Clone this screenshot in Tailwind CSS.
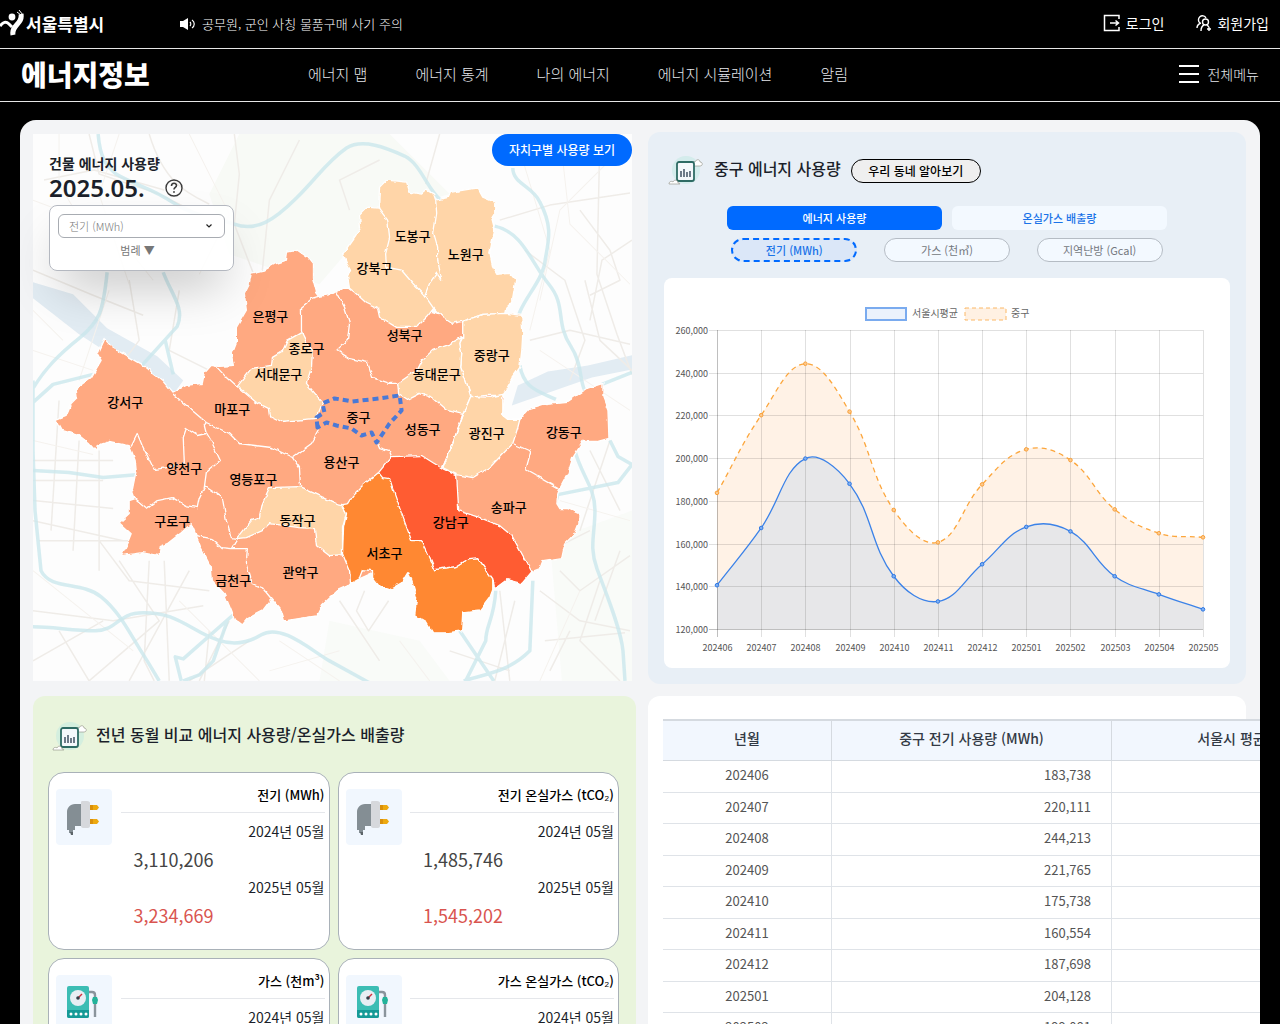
<!DOCTYPE html>
<html lang="ko">
<head>
    <meta charset="UTF-8">
    <meta name="viewport" content="width=device-width, initial-scale=1.0">
    <title>서울특별시 에너지정보</title>
    <script src="https://cdn.jsdelivr.net/npm/@tailwindcss/browser@4"></script>
</head>
<body class="bg-black min-h-screen overflow-x-hidden font-['Noto_Sans_CJK_KR',sans-serif] text-[#1b1f2a]">

    <!-- Shared icons -->
    <svg class="hidden">
        <symbol id="icon-report" viewBox="0 0 36 30">
            <circle cx="18" cy="14" r="14" fill="#bfe9e2" fill-opacity=".5"/>
            <path d="M24 9c-1-3 2-4 3-3 1-3 5-3 5 0 3 0 3 4 0 4h-7z" fill="#fff" stroke="#8b8b80" stroke-width=".6"/>
            <rect x="9" y="6" width="17" height="19" rx="2" fill="#f4f8fb" stroke="#2e6b64" stroke-width="1.8"/>
            <path d="M13 21v-6M16 21v-8M19 21v-5M22 21v-6" stroke="#4c5b6c" stroke-width="1.6"/>
            <path d="M1 28c0-3 3-3 4-2 1-3 5-2 5 1 2 0 2 1 2 1z" fill="#fff" stroke="#8b8b80" stroke-width=".6"/>
        </symbol>
        <symbol id="icon-plug" viewBox="0 0 56 56">
            <rect width="56" height="56" rx="4" fill="#f1f7fe"/>
            <path d="M25 15h-6c-5 0-8 4-8 8v18h2v3h4v-3h2v-4h6z" fill="#848e94"/>
            <path d="M14 43h3v3h-2z" fill="#5d6569"/>
            <path d="M25 13c0-1 1-1 2-1h4c2 0 3 1 3 2v23c0 1-1 2-2 2h-5c-1 0-2-1-2-2z" fill="#d6d8dc"/>
            <path d="M34 16h7l2 2.500-2 2.500h-7zM34 30h7l2 2.500-2 2.500h-7z" fill="#eda910"/>
            <path d="M34 16h3v5h-3zM34 30h3v5h-3z" fill="#d98f0c"/>
        </symbol>
        <symbol id="icon-gas" viewBox="0 0 56 56">
            <rect width="56" height="56" rx="4" fill="#f1f7fe"/>
            <rect x="11" y="11" width="22" height="32" rx="2" fill="#3cbdb4"/>
            <path d="M11 35h22v6a2 2 0 0 1-2 2H13a2 2 0 0 1-2-2z" fill="#159a97"/>
            <circle cx="22" cy="23" r="8" fill="#e9eef4"/>
            <path d="M22 23l4-4" stroke="#d3333f" stroke-width="1.4"/>
            <circle cx="22" cy="23" r="1.8" fill="#333c48"/>
            <g fill="#fff"><circle cx="15" cy="39" r="1.5"/><circle cx="20" cy="39" r="1.5"/><circle cx="25" cy="39" r="1.5"/><circle cx="30" cy="39" r="1.5"/></g>
            <path d="M33 17h3c2 0 3 1 3 3v22" fill="none" stroke="#8a949c" stroke-width="2.4"/>
            <path d="M37 22h4l1 3-1 4h-4l-1-4z" fill="#22b39a"/>
        </symbol>
    </svg>

    <header class="text-white">
        <div class="flex h-12 items-center">
            <a href="#" class="flex w-[180px] items-center gap-[2px]" aria-label="서울특별시">
                <svg class="h-7 w-6" viewBox="0 0 24 28" fill="none">
                    <circle cx="12" cy="7" r="3.4" fill="#fff"/>
                    <path d="M0 16c3-4 6-5 9-2l3 3" stroke="#fff" stroke-width="3"/>
                    <path d="M21 4c2 10-10 11-8 21" stroke="#fff" stroke-width="5"/>
                    <path d="M17 2l4 3M19 0l4 5" stroke="#fff" stroke-width="1"/>
                </svg>
                <span class="text-[17px] leading-6 font-bold">서울특별시</span>
            </a>
            <p class="flex items-center gap-[6px] text-[13px] leading-6 font-light">
                <svg class="h-3 w-4" viewBox="0 0 16 12" fill="none">
                    <path d="M0 3h3l5-3v12L3 9H0z" fill="#fff"/>
                    <path d="M10 4c1 1 1 3 0 4M12 2c3 2 3 6 0 8" stroke="#fff" stroke-width="1.2"/>
                </svg>
                공무원, 군인 사칭 물품구매 사기 주의
            </p>
            <div class="ml-auto flex items-center gap-8 pr-[11px] pb-[2px] text-[14px] leading-6">
                <a href="#" class="flex items-center gap-[5px]">
                    <svg class="h-[18px] w-[18px]" viewBox="0 0 18 18" fill="none" stroke="#fff" stroke-width="1.5">
                        <path d="M16 5V1.500H1.500V16.500H16V13M7 9h8M12.500 6.500L15.500 9l-3 2.500"/>
                    </svg>
                    로그인
                </a>
                <a href="#" class="flex items-center gap-[5px]">
                    <svg class="h-[18px] w-4" viewBox="0 0 16 18" fill="none" stroke="#fff" stroke-width="1.400">
                        <path d="M4 9a4 4 0 1 1 6-5M1 14c0-2 1-4 4-5"/>
                        <circle cx="9.500" cy="8" r="3"/>
                        <path d="M5 17c0-3 1-5 3-6M11 11l2 2M13 13v4M11 15h4"/>
                    </svg>
                    회원가입
                </a>
            </div>
        </div>
        <div class="flex h-[54px] items-center border-y border-white/90 px-[21px] pb-[2px]">
            <h1 class="w-[287px] text-[28px] leading-[50px] font-black">에너지정보</h1>
            <nav class="flex gap-12 text-[15px] leading-6 font-light text-gray-200">
                <a href="#">에너지 맵</a>
                <a href="#">에너지 통계</a>
                <a href="#">나의 에너지</a>
                <a href="#">에너지 시뮬레이션</a>
                <a href="#">알림</a>
            </nav>
            <button class="ml-auto flex items-center gap-2 text-[14px] leading-6 font-light text-gray-200">
                <svg class="h-[18px] w-5" viewBox="0 0 20 18" stroke="#fff" stroke-width="2"><path d="M0 1h20M0 9h20M0 17h20"/></svg>
                전체메뉴
            </button>
        </div>
    </header>

    <main class="mx-5 mt-[18px] grid grid-cols-[603fr_598fr] gap-3 overflow-hidden rounded-2xl bg-[#f3f4f6] pt-3 pr-[14px] pb-8 pl-[13px]">

        <!-- Map -->
        <section class="relative pt-[2px] pr-1">
            <svg class="block w-full" viewBox="34 134 598 546">
                <defs>
                    <filter id="rough" x="0" y="0" width="1" height="1">
                        <feTurbulence type="fractalNoise" baseFrequency=".13" numOctaves="2" seed="4"/>
                        <feDisplacementMap in="SourceGraphic" scale="4" xChannelSelector="R" yChannelSelector="G"/>
                    </filter>
                    <clipPath id="frame"><rect x="34" y="134" width="598" height="546"/></clipPath>
                </defs>
                <g clip-path="url(#frame)" fill="none" stroke-linejoin="round">
                    <rect x="34" y="134" width="598" height="546" fill="#fdfdfd"/>
                    <path d="M240 134h150l60 60-70 20-60 70-90-30-20-60z" fill="#f8faf6"/>
                    <path d="M550 540l82-30v170h-70zM330 620l90 20 30 40H320z" fill="#f9fbf8"/>
                    <path d="M34 282l40 12 34 34 50 28 26 24-10 14-44-28-50-32-46-36z" fill="#e2ecf3"/>
                    <path d="M518 385l30-14 40-6 44-10v14l-40 8-40 14-40 14z" fill="#e2ecf3"/>
                    <!-- minor roads -->
                    <g stroke="#efece8" stroke-width="1.500">
                        <path d="M150 134c15 50 40 60 60 70M235 134l5 40-5 50 27 70M300 140l-30 60-8 80M90 134l10 40 60 20 60 30M34 270l60 25 50 20M45 180l50-10 70 20M130 280l10 60-30 40M180 290l-10 60 40 20M380 160l-40 20 10 30M440 134l-14 50M500 220l50-15 80-12M525 250l40 30 20 60-15 40M600 134l-3 140 20 60 15 40M580 210l30 40 10 30-30 15M530 340l40-10 60 14M585 280l15 60 32 30M632 240l-30 20-12 60"/>
                        <path d="M34 460h80M34 480h70M34 500l80 8M40 540h90M60 400l-8 130M80 440l-6 110M100 450v120M34 520l90 20M120 560l40 60-70 60M150 560l-5 100 10 20M100 540l30 40 80 10M34 610l80 10 90-15M60 630l30 50M34 660l70-40M165 560l5 120M190 570l-60 110M230 620l-30 60M250 640l-60 40M210 630l-5 50"/>
                        <path d="M365 590l-8 20 12 20 20-30M340 600l40 60M500 590l10 90M515 600l-20 80M560 570l20 20 50-35M540 590l40 30 50 10M545 640l80-8M570 630l-20 40M600 580l-20 60 40 40M450 650l60 20M620 550l-25 70M530 560l60-30M590 450l30 60M610 440l-30 90"/>
                    </g>
                    <g stroke="#f5f2ee">
                        <path d="M34 200l80 30 40 50M60 134v50l30 50M120 134l-20 60 30 90M190 134l40 80-30 60M34 350l60 20M110 290l-30 90M34 310l30 30M520 150l30 100-20 80M560 134l10 90 60 60M620 150l-60 60-20 90M540 350l90 60M34 440l60 14M34 570l100 80M180 600l80 80M280 640l60 40M270 670l70-20M400 640l30 40M560 500l70 20M540 680l40-90"/>
                    </g>
                    <!-- rivers and expressways -->
                    <g stroke="#cbe7ec" stroke-width="3.500" stroke-opacity=".8">
                        <path d="M99 134c2 24 8 32 18 40 16 10 36 14 56 28s40 14 62 22 40-4 62-26 30-36 50-50c16-10 40 0 58 8 16 8 22 32 36 44 10 6 20 8 34 12"/>
                        <path d="M513 168c0 16 20 18 27 34 14 26 8 40 5 60-4 24-30 44-28 66M495 226c28 6 36 36 54 58s6 38 22 62 4 50 26 50M520 365c4 24 20 26 36 34M632 372l-30 12"/>
                        <path d="M108 272c-4 40-8 50-28 66s-34 30-46 50M164 272c8 22 22 36 14 54l-38 42M166 340l8 34M34 402l20-18 40-10M34 380v70l2 60 6 60c10 20 40 10 60 26s30 40 46 64l12 20"/>
                        <path d="M34 470l36 2 34 5 36-3M34 626c20 0 40 4 62 4s22-18 48-18 36 8 58 20 40 14 60 2 50 16 68 26l40 22M234 614l-50 44-8-2 6 24M228 620l-14 40-14 14-16 6"/>
                        <path d="M575 450c6 24 20 36 20 60s-6 36 2 58 24 60 26 82l2 30M610 440l8 16 14 8-14 18-60 12-4 14M533 580l-3 70c-20 20-40 22-66 30M496 590c-2 30-10 34-10 50l-20 40M460 630l34 50"/>
                    </g>
                </g>

                <g filter="url(#rough)" stroke="#fff" stroke-width="1.300" stroke-linejoin="round">
                    <path fill="#ffa981" d="M252 273L265 270 275 264 287 260 288 252 298 250 308 257 313 263 313 277 317 292 320 296 332 294 343 288 350 288 400 300 463 321 505 392 503 415 508 419 520 419 530 408 547 403 568 401 587 388 603 383 603 397 608 410 609 438 597 441 583 441 573 457 568 473 560 488 558 493 557 503 560 508 568 508 579 513 579 523 575 533 565 543 562 557 543 560 540 568 532 571 480 560 400 560 351 582 348 585 337 590 323 603 317 615 285 620 282 610 272 598 263 610 248 618 243 624 235 618 232 610 225 593 213 580 212 567 202 548 197 535 192 523 182 532 168 543 161 546 160 555 143 552 122 555 128 543 132 533 120 522 130 513 130 500 136 498 133 490 137 470 136 460 133 452 130 445 110 441 98 445 97 451 90 443 80 435 63 430 57 419 67 415 72 403 78 397 77 388 92 377 102 360 98 353 105 338 113 347 130 357 147 367 163 380 173 392 187 385 203 383 205 373 212 365 220 366 235 365 233 353 237 343 237 327 247 310 245 293 250 283Z"/>
                    <!-- lowest band -->
                    <g fill="#ffd5a8">
                        <path d="M350 288L348 277 351 270 347 263 343 253 348 247 355 237 361 228 360 215 368 207 379 208 380 187 387 180 407 182 410 192 422 194 427 190 434 194 436 200 450 197 452 192 470 189 478 188 483 197 495 202 495 213 492 218 495 230 492 243 490 253 493 267 497 274 510 273 516 280 513 297 513 302 507 308 506 313 483 314 463 321 452 323 443 317 434 308 427 317 417 327 397 327 380 317 378 308 367 303 355 292Z"/>
                        <path d="M463 321L483 314 506 313 522 315 523 333 522 350 520 367 513 377 505 392 503 395 487 395 472 397 467 383 461 367 462 353 460 343 463 337Z"/>
                        <path d="M462 337L447 345 433 350 422 360 417 370 398 383 399 393 408 399 420 393 433 398 447 410 463 414 471 396 467 383 461 367 462 353 460 343Z"/>
                        <path d="M471 396L490 397 503 394 503 415 508 419 520 419 518 427 513 443 490 467 473 477 457 474 443 467 453 443 463 415Z"/>
                        <path d="M302 332L307 342 313 350 312 367 307 383 323 402 317 418 282 421 270 415 269 408 257 402 238 386 252 368 272 365 273 357 283 351 288 340Z"/>
                        <path d="M270 487L300 486 320 495 337 503 342 504 347 513 343 527 343 554 330 555 317 545 315 528 300 527 270 523 263 530 247 537 238 538 252 520 260 517 263 503Z"/>
                    </g>
                    <path fill="#ff8832" d="M379 472L363 485 353 495 348 503 342 504 347 513 344 527 343 553 350 570 351 582 360 577 363 569 373 570 373 577 380 586 390 589 402 582 408 572 412 580 417 597 415 615 427 622 433 632 447 632 462 630 463 612 480 610 490 597 493 589 493 578 485 567 478 557 468 558 455 566 435 569 400 480Z"/>
                    <path fill="#ff5b30" d="M379 472L392 456 422 455 433 462 443 468 457 475 459 510 480 517 500 525 512 535 532 571 522 583 507 579 495 588 493 578 485 567 478 557 468 558 455 566 435 569 432 562 427 550 422 540 412 540 402 513 395 493 390 478 383 477Z"/>
                    <!-- borders -->
                    <path fill="none" d="M379 208L388 220 390 237 386 253 387 267 402 270 413 283 425 295 434 308M436 200L437 213 434 233 438 247 438 260 442 280 437 273 430 283 425 295M302 332V307L313 298 320 296M337 292L345 307 350 323 348 340 337 350 350 358 368 362 373 377 390 383 398 383M213 362L227 377 238 387M173 393L207 422 230 433 240 443 272 447 293 457 312 443 320 429M293 457L300 467 301 486M132 445L138 433 143 445 155 469 167 467 185 462 184 437 187 428 198 435 207 433 205 425 207 422M207 433L213 443 221 460 207 472 205 487 200 497 198 507 187 505 173 497 158 500 148 508 136 498M205 485L223 497 227 520 232 537 238 538M197 535L212 538 222 547 232 548 238 538M232 548H248L247 563 253 583 263 587 272 598M513 443L531 451 526 469 560 488M378 443L380 448 390 451 392 456M463 414L453 443 443 467"/>
                </g>
                <path fill="none" stroke="#4a79d6" stroke-width="4" stroke-dasharray="6 4" stroke-linejoin="round" d="M318 427L317 417 325 412 323 403 335 398 353 401 380 398 400 395 402 410 390 423 377 442 372 432 362 435 352 428 337 425 327 422Z"/>

                <g class="text-[13px] font-medium" fill="#000" text-anchor="middle">
                    <text x="413" y="241">도봉구</text>
                    <text x="466" y="259">노원구</text>
                    <text x="375" y="273">강북구</text>
                    <text x="271" y="321">은평구</text>
                    <text x="405" y="340">성북구</text>
                    <text x="307" y="353">종로구</text>
                    <text x="492" y="360">중랑구</text>
                    <text x="279" y="379">서대문구</text>
                    <text x="437" y="379">동대문구</text>
                    <text x="126" y="407">강서구</text>
                    <text x="233" y="414">마포구</text>
                    <text x="359" y="422">중구</text>
                    <text x="423" y="434">성동구</text>
                    <text x="487" y="438">광진구</text>
                    <text x="564" y="437">강동구</text>
                    <text x="185" y="472">양천구</text>
                    <text x="342" y="466">용산구</text>
                    <text x="254" y="483">영등포구</text>
                    <text x="509" y="511">송파구</text>
                    <text x="173" y="525">구로구</text>
                    <text x="298" y="524">동작구</text>
                    <text x="451" y="526">강남구</text>
                    <text x="385" y="557">서초구</text>
                    <text x="301" y="576">관악구</text>
                    <text x="234" y="584">금천구</text>
                </g>
            </svg>

            <div class="absolute top-5 left-4 w-[185px]">
                <h2 class="text-[14px] leading-[22px] font-bold">건물 에너지 사용량</h2>
                <div class="flex items-center gap-5">
                    <p class="font-['Noto_Sans'] text-[24px] leading-[28px] font-semibold">2025.05.</p>
                    <button aria-label="도움말">
                        <svg class="block size-[18px]" viewBox="0 0 18 18" fill="none" stroke="#3c3c3c">
                            <circle cx="9" cy="9" r="8" stroke-width="1.400"/>
                            <path d="M6.500 7c0-3.500 5-3.500 5-.5 0 1.800-2.500 2-2.500 4" stroke-width="1.600"/>
                            <circle cx="9" cy="13" r=".6"/>
                        </svg>
                    </button>
                </div>
                <div class="mt-[3px] h-[66px] rounded-lg border border-[#b4b8c0] bg-white/90 px-2 pt-2 text-center shadow-2xl">
                    <label class="relative block">
                        <select class="block h-6 w-full appearance-none rounded-md border border-[#a8acb2] bg-white px-[10px] text-[11px] font-light text-[#777]" aria-label="에너지원">
                            <option>전기 (MWh)</option>
                            <option>가스 (천㎥)</option>
                            <option>지역난방 (Gcal)</option>
                        </select>
                        <svg class="absolute top-[10px] right-[13px] h-1 w-[6px]" viewBox="0 0 6 4" fill="none" stroke="#222" stroke-width="1.200"><path d="M.5.5L3 3 5.500.5"/></svg>
                    </label>
                    <button class="block w-full pr-2 text-[11px] leading-6 text-[#777]">범례 ▼</button>
                </div>
            </div>
            <button class="absolute top-[2px] right-1 h-8 w-[140px] rounded-2xl bg-[#006aff] text-[12px] font-medium text-white">자치구별 사용량 보기</button>
        </section>

        <!-- District usage chart -->
        <section class="rounded-xl bg-[#e8eff6] px-4 pt-[24px] pb-4">
            <div class="flex items-center pl-1">
                <svg class="h-[30px] w-9"><use href="#icon-report"/></svg>
                <h2 class="ml-[10px] pb-[6px] text-[16px] leading-6 font-medium">중구 에너지 사용량</h2>
                <button class="ml-[10px] h-6 w-[130px] rounded-full border border-black bg-[#efefef] text-[12px] leading-5 font-medium text-black">우리 동네 알아보기</button>
            </div>
            <div class="mx-auto mt-5 flex w-[440px] gap-[10px] text-[11px] font-medium">
                <button class="h-6 flex-1 rounded-md bg-[#006aff] text-white">에너지 사용량</button>
                <button class="h-6 flex-1 rounded-md bg-[#f3f9ff] text-[#1a73e8]">온실가스 배출량</button>
            </div>
            <div class="mx-auto mt-2 grid w-[458px] grid-cols-3 justify-items-center text-[11px] text-[#737880]">
                <button class="h-6 w-[126px] rounded-full border-2 border-dashed border-[#006aff] bg-[#dbe7f8] font-medium text-[#1a73e8]">전기 (MWh)</button>
                <button class="h-6 w-[126px] rounded-full border border-[#b5bcc4] bg-[#f3f9ff]">가스 (천㎥)</button>
                <button class="h-6 w-[126px] rounded-full border border-[#b5bcc4] bg-[#f3f9ff]">지역난방 (Gcal)</button>
            </div>
            <div class="mt-4 rounded-lg bg-white">
                <svg id="chart" class="block w-full" viewBox="0 0 566 390" fill="none">
                    <rect x="202" y="30" width="40" height="12" fill="#ebf2fc" stroke="#7aabef" stroke-width="2"/>
                    <rect x="301" y="30" width="41" height="12" fill="#fff1e3" stroke="#fbb867" stroke-dasharray="4 3"/>
                    <g class="text-[10px]" fill="#666">
                        <text x="248" y="39">서울시평균</text>
                        <text x="347" y="39">중구</text>
                    </g>
                </svg>
            </div>
        </section>

        <!-- Year-on-year comparison -->
        <section class="rounded-xl bg-[#e9f4dc] px-[15px] pt-[26px] pb-6">
            <div class="flex items-center pl-1">
                <svg class="h-[30px] w-9"><use href="#icon-report"/></svg>
                <h2 class="ml-2 pb-[6px] text-[16px] leading-6 font-medium">전년 동월 비교 에너지 사용량/온실가스 배출량</h2>
            </div>
            <div class="mt-5 grid grid-cols-2 gap-2 pr-[2px]">
                <article class="flex h-[178px] justify-between rounded-2xl border border-[#a9b1b8] bg-white pt-2 pr-1 pl-[7px]">
                    <svg class="mt-2 size-14"><use href="#icon-plug"/></svg>
                    <div class="w-[204px] text-right text-[14px] leading-[28px]">
                        <h3 class="mb-1 border-b border-gray-200 pb-1 text-[13px] leading-[27px] font-medium text-black">전기 (MWh)</h3>
                        <p>2024년 05월</p>
                        <p class="w-[93px] text-[18px] text-[#444]">3,110,206</p>
                        <p>2025년 05월</p>
                        <p class="w-[93px] text-[18px] text-[#d9544f]">3,234,669</p>
                    </div>
                </article>
                <article class="flex h-[178px] justify-between rounded-2xl border border-[#a9b1b8] bg-white pt-2 pr-1 pl-[7px]">
                    <svg class="mt-2 size-14"><use href="#icon-plug"/></svg>
                    <div class="w-[204px] text-right text-[14px] leading-[28px]">
                        <h3 class="mb-1 border-b border-gray-200 pb-1 text-[13px] leading-[27px] font-medium text-black">전기 온실가스 (tCO₂)</h3>
                        <p>2024년 05월</p>
                        <p class="w-[93px] text-[18px] text-[#444]">1,485,746</p>
                        <p>2025년 05월</p>
                        <p class="w-[93px] text-[18px] text-[#d9544f]">1,545,202</p>
                    </div>
                </article>
                <article class="flex h-[178px] justify-between rounded-2xl border border-[#a9b1b8] bg-white pt-2 pr-1 pl-[7px]">
                    <svg class="mt-2 size-14"><use href="#icon-gas"/></svg>
                    <div class="w-[204px] text-right text-[14px] leading-[28px]">
                        <h3 class="mb-1 border-b border-gray-200 pb-1 text-[13px] leading-[27px] font-medium text-black">가스 (천m³)</h3>
                        <p>2024년 05월</p>
                    </div>
                </article>
                <article class="flex h-[178px] justify-between rounded-2xl border border-[#a9b1b8] bg-white pt-2 pr-1 pl-[7px]">
                    <svg class="mt-2 size-14"><use href="#icon-gas"/></svg>
                    <div class="w-[204px] text-right text-[14px] leading-[28px]">
                        <h3 class="mb-1 border-b border-gray-200 pb-1 text-[13px] leading-[27px] font-medium text-black">가스 온실가스 (tCO₂)</h3>
                        <p>2024년 05월</p>
                    </div>
                </article>
            </div>
        </section>

        <!-- Monthly table -->
        <section class="min-w-0 rounded-xl bg-white pt-[23px] pb-6 pl-[15px]">
            <table class="w-[807px] table-fixed border-separate border-spacing-0 bg-white text-[13px] text-[#555]">
                <colgroup><col class="w-[169px]"><col class="w-[280px]"><col></colgroup>
                <thead>
                    <tr class="h-[42px] text-[14px] text-[#333a45]">
                        <th class="border-t-2 border-r border-b border-[#d5dae0] bg-[#f2f7fe] pb-1 font-medium">년월</th>
                        <th class="border-t-2 border-r border-b border-[#d5dae0] bg-[#f2f7fe] pb-1 font-medium">중구 전기 사용량 (MWh)</th>
                        <th class="border-t-2 border-b border-[#d5dae0] bg-[#f2f7fe] pb-1 font-medium">서울시 평균 전기 사용량 (MWh)</th>
                    </tr>
                </thead>
                <tbody id="rows"></tbody>
            </table>
        </section>
    </main>

    <script>
        const months = ['202406', '202407', '202408', '202409', '202410', '202411', '202412', '202501', '202502', '202503', '202504', '202505'];
        const district = [183738, 220111, 244213, 221765, 175738, 160554, 187698, 204128, 199081, 176020, 164850, 162930];
        const average = [140500, 167300, 199800, 188000, 144700, 132900, 150300, 167800, 165700, 144700, 136200, 129200];

        document.getElementById('rows').innerHTML = months.map((m, i) => `
            <tr class="odd:h-8 even:h-[31px]">
                <td class="border-r border-b border-[#dfe3e8] pb-[3px] text-center">${m}</td>
                <td class="border-r border-b border-[#dfe3e8] pr-5 pb-[3px] text-right">${district[i].toLocaleString('en-US')}</td>
                <td class="border-b border-[#dfe3e8] pr-5 pb-[3px] text-right">${average[i].toLocaleString('en-US')}</td>
            </tr>`).join('');

        const left = 53, right = 539, top_ = 52, bottom = 351;
        const px = i => left + (right - left) * i / 11;
        const py = v => bottom - (bottom - top_) * (v - 120000) / 140000;

        // cardinal-like spline, tension .4
        function curve(values) {
            const p = values.map((v, i) => [px(i), py(v)]);
            const cp = p.map((c, i) => {
                const a = p[i - 1] || c, b = p[i + 1] || c;
                const d1 = Math.hypot(c[0] - a[0], c[1] - a[1]), d2 = Math.hypot(b[0] - c[0], b[1] - c[1]);
                const f1 = 0.4 * d1 / (d1 + d2), f2 = 0.4 * d2 / (d1 + d2);
                return [c[0] - f1 * (b[0] - a[0]), c[1] - f1 * (b[1] - a[1]), c[0] + f2 * (b[0] - a[0]), c[1] + f2 * (b[1] - a[1])];
            });
            let d = `M${p[0]}`;
            for (let i = 1; i < p.length; i++) d += `C${cp[i - 1][2]},${cp[i - 1][3]} ${cp[i][0]},${cp[i][1]} ${p[i]}`;
            return d;
        }

        let svg = '';
        const close = `L${right},${bottom}L${left},${bottom}Z`;
        svg += `<path d="${curve(district)}${close}" fill="#fff2e6"/>`;
        svg += `<path d="${curve(average)}${close}" fill="#e7e7e9"/>`;
        for (let v = 120000; v <= 260000; v += 20000) {
            const y = Math.round(py(v)) + 0.5;
            svg += `<path d="M${left - 8} ${y}H${right}" stroke="#000" stroke-opacity="${v === 120000 ? 0.25 : 0.12}"/>`;
            svg += `<text x="44" y="${y + 3}" text-anchor="end" fill="#555" class="text-[9px]">${v.toLocaleString('en-US')}</text>`;
        }
        months.forEach((m, i) => {
            const x = Math.round(px(i)) + 0.5;
            svg += `<path d="M${x} ${top_}V${bottom + 8}" stroke="#000" stroke-opacity="${i ? 0.12 : 0.25}"/>`;
            svg += `<text x="${x}" y="373" text-anchor="middle" fill="#555" class="text-[9px]">${m}</text>`;
        });
        svg += `<path d="${curve(district)}" stroke="#fca63c" stroke-width="1.3" stroke-dasharray="5 4"/>`;
        svg += `<path d="${curve(average)}" stroke="#3b82e8" stroke-width="1.3"/>`;
        district.forEach((v, i) => svg += `<circle cx="${px(i)}" cy="${py(v)}" r="1.8" fill="#fdc98c" stroke="#f9a03a"/>`);
        average.forEach((v, i) => svg += `<circle cx="${px(i)}" cy="${py(v)}" r="1.8" fill="#7fb0f2" stroke="#2f78e4"/>`);
        document.getElementById('chart').insertAdjacentHTML('beforeend', svg);
    </script>
</body>
</html>
